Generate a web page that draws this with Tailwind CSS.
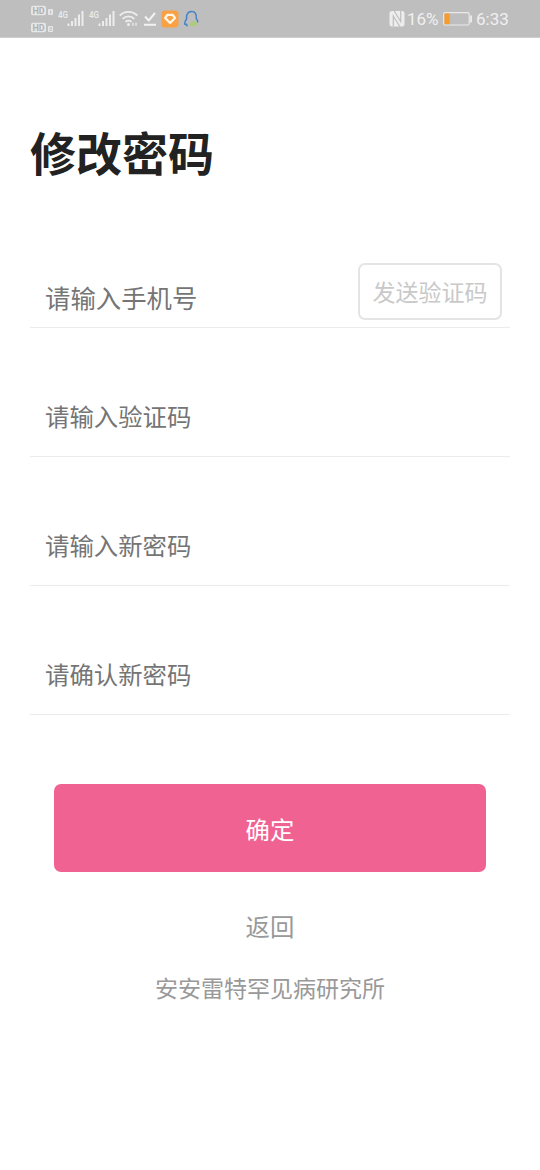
<!DOCTYPE html>
<html lang="zh-CN">
<head>
<meta charset="utf-8">
<meta name="viewport" content="width=device-width, initial-scale=1">
<title>修改密码</title>
<script src="https://cdn.jsdelivr.net/npm/@tailwindcss/browser@4"></script>
</head>
<body class="min-h-screen bg-white font-['Noto_Sans_CJK_SC',sans-serif]">
<header class="flex h-[38px] items-center justify-between border-b border-[#cfcfcf] bg-[#bebebe] pr-[31px] pl-[30px] font-[Roboto,sans-serif] text-[#f0f0f0]">
  <div class="flex h-full items-center">
    <!-- HD voice, SIM 1 and 2 -->
    <svg class="h-[37px] w-[26px]" viewBox="0 0 26 37" fill="none" stroke="#ececec">
      <rect x="1" y="5.7" width="15" height="9.6" rx="2" fill="#e6e6e6" stroke="none"/>
      <text x="8.5" y="13.7" font-size="9" font-weight="700" text-anchor="middle" fill="#b0b0b0" stroke="none">HD</text>
      <rect x="18" y="9" width="5" height="6" rx="1" fill="#e6e6e6" stroke="none"/><path d="M20.6 10.5v3.3" stroke="#bebebe"/>
      <rect x="1" y="22.7" width="15" height="9.6" rx="2" fill="#e6e6e6" stroke="none"/>
      <text x="8.5" y="30.7" font-size="9" font-weight="700" text-anchor="middle" fill="#b0b0b0" stroke="none">HD</text>
      <rect x="18" y="26" width="5" height="6" rx="1" fill="#e6e6e6" stroke="none"/><path d="M19.5 27.7h2v1.3h-1.6v1.5h2" stroke="#bebebe" stroke-width=".8"/>
    </svg>
    <!-- Signal strength -->
    <svg class="ml-[2px] h-[37px] w-[28px]" viewBox="0 0 28 37" fill="#ececec">
      <text x="0" y="18" font-size="8.5" font-weight="500" textLength="10" lengthAdjust="spacingAndGlyphs">4G</text>
      <path d="M9.5 23.5h2V26h-2zM13 21h2v5h-2zM16.500 18h2v8h-2zM20 14.500h2V26h-2zM23.500 11h2v15h-2z"/>
    </svg>
    <svg class="ml-[2.500px] h-[37px] w-[28px]" viewBox="0 0 28 37" fill="#ececec">
      <text x="0" y="18" font-size="8.5" font-weight="500" textLength="10" lengthAdjust="spacingAndGlyphs">4G</text>
      <path d="M9.5 23.5h2V26h-2zM13 21h2v5h-2zM16.500 18h2v8h-2zM20 14.500h2V26h-2zM23.500 11h2v15h-2z"/>
    </svg>
    <!-- Wi-Fi -->
    <svg class="ml-[2px] h-[37px] w-[20px]" viewBox="0 0 20 37" fill="none" stroke="#eeeeee" stroke-width="1.8">
      <path d="M.7 15.500a12.500 12.500 0 0 1 17.600 0M3.700 18.800a8.300 8.300 0 0 1 11.600 0M6.500 21.900a4.300 4.300 0 0 1 6 0"/>
      <circle cx="9.500" cy="24.500" r="1.500" fill="#eeeeee" stroke="none"/>
      <path d="M14 22.800v3M17 22.800v3" stroke-width="1.300"/>
    </svg>
    <!-- Task done -->
    <svg class="ml-[4px] h-[37px] w-[14px]" viewBox="0 0 14 37" fill="none" stroke="#f2f2f2" stroke-width="2">
      <path d="M2 16.500l3.800 4L12 13M1 24.800h12"/>
    </svg>
    <!-- Orange app -->
    <svg class="ml-[4.500px] h-[37px] w-[18px]" viewBox="0 0 18 37">
      <rect x=".500" y="10.500" width="17" height="17" rx="3.500" fill="#fba043"/>
      <path d="M6.300 14.800h5.400l2.300 3.200-4.900 5-4.900-5z" fill="#fba043" stroke="#fff7e8" stroke-width="2.300" stroke-linejoin="round"/>
    </svg>
    <!-- Messenger outline with a green leaf -->
    <svg class="ml-[4px] h-[37px] w-[16px]" viewBox="0 0 16 37" fill="none" stroke-linecap="round" stroke-linejoin="round">
      <path d="M4 25.800l-.4-1.600q-1.400.6-1.900-.4-.2-2.200 1.900-4.800-.6-7.500 5-7.500 5.300 0 4.700 7.200 1 1 1.500 3" stroke="#4381c8" stroke-width="1.500"/>
      <path d="M6.500 25.500q.5-4.500 5-4.800l3.500 2.800q-.8 3-4.300 3t-4.200-1z" fill="#adcb80"/>
    </svg>
  </div>
  <div class="flex h-full items-center">
    <!-- NFC -->
    <svg class="h-[37px] w-[16px]" viewBox="0 0 16 37">
      <rect x=".500" y="11" width="15" height="15.500" rx="2.500" fill="#ededed"/>
      <path d="M4.300 26.500V16l6.500 10.500M11.700 11v10.500L5.200 11" fill="none" stroke="#bebebe" stroke-width="1.200"/>
    </svg>
    <span class="ml-[2px] w-[33px] pt-px text-[17px] leading-none tracking-[-0.1px] whitespace-nowrap">16%</span>
    <svg class="ml-[3px] h-[37px] w-[30px]" viewBox="0 0 30 37" fill="none">
      <rect x=".700" y="12.700" width="25.500" height="12.300" rx="1.500" stroke="#e9e9e9" stroke-width="1.200"/>
      <rect x="1.500" y="13.500" width="5.200" height="10.700" fill="#fa9a2a"/>
      <path d="M28 15.500v7" stroke="#eeeeee" stroke-width="1.800"/>
    </svg>
    <span class="ml-[3px] w-[33px] pt-px text-[17px] leading-none whitespace-nowrap">6:33</span>
  </div>
</header>

<main class="flex flex-col px-[30px] pt-[80px]">
  <h1 class="h-[66px] text-[46px] leading-[66px] font-bold text-[#222222]">修改密码</h1>

  <form class="mt-[72px] flex flex-col">
    <div class="flex h-[72px] items-start justify-between border-b border-[#ececec] pr-[8px] pl-[15px]">
      <label class="pt-[22px] text-[25.400px] leading-[38px] text-[#757575]">请输入手机号</label>
      <button type="button" class="mt-[7px] h-[57px] w-[144px] rounded-[7px] border-2 border-[#e4e4e4] pb-[1px] text-[23px] leading-[52px] whitespace-nowrap text-[#c9c9c9]">发送验证码</button>
    </div>
    <div class="flex h-[129px] flex-col justify-end border-b border-[#ececec] pb-[21px] pl-[15px] text-[24.400px] leading-[38px] text-[#757575]">请输入验证码</div>
    <div class="flex h-[129px] flex-col justify-end border-b border-[#ececec] pb-[21px] pl-[15px] text-[24.400px] leading-[38px] text-[#757575]">请输入新密码</div>
    <div class="flex h-[129px] flex-col justify-end border-b border-[#ececec] pb-[21px] pl-[15px] text-[24.400px] leading-[38px] text-[#757575]">请确认新密码</div>
    <button type="button" class="mx-[24px] mt-[69px] h-[88px] rounded-[7px] bg-[#f06292] pt-[2px] text-[24.400px] text-white">确定</button>
  </form>

  <a class="mt-[35px] text-center text-[24.400px] leading-[38px] text-[#999999]">返回</a>
  <p class="mt-[24px] text-center text-[23px] leading-[36px] text-[#999999]">安安雷特罕见病研究所</p>
</main>
</body>
</html>
